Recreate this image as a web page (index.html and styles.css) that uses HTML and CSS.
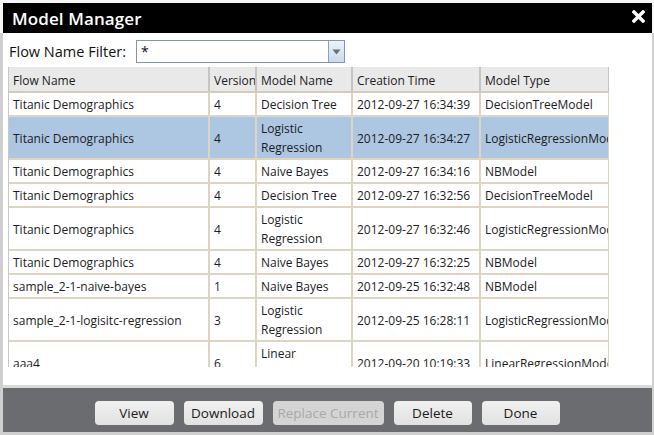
FILE: index.html
```html
<!DOCTYPE html>
<html>
<head>
<meta charset="utf-8">
<link rel="stylesheet" href="styles.css">
</head>
<body>
<div class="dialog">
  <div class="titlebar">
    <span class="title">Model Manager</span>
    <svg class="close" width="13" height="13" viewBox="0 0 13 13"><path d="M2 2 L11 11 M11 2 L2 11" stroke="#fff" stroke-width="3.4" stroke-linecap="square"/></svg>
  </div>
  <div class="content">
    <div class="filter">
      <span class="label">Flow Name Filter:</span>
      <div class="select">
        <span class="value">*</span>
        <span class="drop"><svg width="9" height="6" viewBox="0 0 9 6"><path d="M0.5 0.5 H8.5 L4.5 5.5 Z" fill="#6e6e6e"/></svg></span>
      </div>
    </div>
    <div class="grid">
      <table>
        <colgroup><col class="c1"><col class="c2"><col class="c3"><col class="c4"><col class="c5"></colgroup>
        <thead>
          <tr><th>Flow Name</th><th>Version</th><th>Model Name</th><th>Creation Time</th><th>Model Type</th></tr>
        </thead>
        <tbody>
          <tr><td>Titanic Demographics</td><td>4</td><td>Decision Tree</td><td>2012-09-27 16:34:39</td><td>DecisionTreeModel</td></tr>
          <tr class="sel"><td>Titanic Demographics</td><td>4</td><td>Logistic Regression</td><td>2012-09-27 16:34:27</td><td>LogisticRegressionModel</td></tr>
          <tr><td>Titanic Demographics</td><td>4</td><td>Naive Bayes</td><td>2012-09-27 16:34:16</td><td>NBModel</td></tr>
          <tr><td>Titanic Demographics</td><td>4</td><td>Decision Tree</td><td>2012-09-27 16:32:56</td><td>DecisionTreeModel</td></tr>
          <tr><td>Titanic Demographics</td><td>4</td><td>Logistic Regression</td><td>2012-09-27 16:32:46</td><td>LogisticRegressionModel</td></tr>
          <tr><td>Titanic Demographics</td><td>4</td><td>Naive Bayes</td><td>2012-09-27 16:32:25</td><td>NBModel</td></tr>
          <tr><td>sample_2-1-naive-bayes</td><td>1</td><td>Naive Bayes</td><td>2012-09-25 16:32:48</td><td>NBModel</td></tr>
          <tr><td>sample_2-1-logisitc-regression</td><td>3</td><td>Logistic Regression</td><td>2012-09-25 16:28:11</td><td>LogisticRegressionModel</td></tr>
          <tr><td>aaa4</td><td>6</td><td>Linear Regression</td><td>2012-09-20 10:19:33</td><td>LinearRegressionModel</td></tr>
        </tbody>
      </table>
    </div>
  </div>
  <div class="footer">
    <button class="btn w1">View</button>
    <button class="btn w1">Download</button>
    <button class="btn w2" disabled>Replace Current</button>
    <button class="btn w3">Delete</button>
    <button class="btn w3">Done</button>
  </div>
</div>
</body>
</html>
```
FILE: styles.css
```css
html, body {
  margin: 0;
  padding: 0;
}
body {
  width: 654px;
  height: 435px;
  background: linear-gradient(#f6f6f6 0, #f6f6f6 33px, #cfcfcf 33px);
  font-family: "Open Sans", "DejaVu Sans", sans-serif;
  overflow: hidden;
}
.dialog {
  margin: 3px 0 0 3px;
  width: 649px;
  height: 429px;
  display: flex;
  flex-direction: column;
  background: #fff;
}
.titlebar {
  height: 30px;
  background: #000;
  display: flex;
  align-items: center;
  justify-content: space-between;
  padding: 0 7px 0 9px;
}
.title {
  color: #fff;
  font-size: 17px;
  font-weight: 600;
  letter-spacing: 0.1px;
}
.close {
  margin-top: -3px;
}
.content {
  flex: 1;
  padding: 7px 0 0 5px;
  display: flex;
  flex-direction: column;
  border-bottom: 3px solid #d9d9d9;
}
.filter {
  display: flex;
  align-items: center;
  height: 23px;
  padding-left: 1px;
}
.label {
  font-size: 14.5px;
  color: #111;
  width: 127px;
}
.select {
  width: 207px;
  height: 21px;
  border: 1px solid #7d97b8;
  display: flex;
  justify-content: space-between;
}
.value {
  font-size: 14px;
  padding-left: 4px;
  line-height: 21px;
  color: #111;
}
.drop {
  width: 15px;
  border-left: 1px solid #8aa1bf;
  background: linear-gradient(#eef3fa, #c9d9ee);
  display: flex;
  align-items: center;
  justify-content: center;
}
.grid {
  margin-top: 4px;
  width: 600px;
  height: 300px;
  overflow: hidden;
  border-left: 1px solid #c8c8c8;
}
table {
  table-layout: fixed;
  border-collapse: collapse;
  width: 600px;
  font-size: 12px;
  color: #1c1c24;
}
col.c1 { width: 200px; }
col.c2 { width: 47px; }
col.c3 { width: 96px; }
col.c4 { width: 128px; }
col.c5 { width: 129px; }
th {
  background: #e9e9e9;
  font-weight: normal;
  text-align: left;
  height: 22px;
  padding: 2px 4px 0;
  border-right: 2px solid #c4c4c4;
  border-bottom: 2px solid #d4ccbc;
  white-space: nowrap;
  overflow: hidden;
}
td {
  padding: 2px 4px 1px;
  line-height: 19px;
  border-right: 2px solid #ddd4c3;
  border-bottom: 2px solid #ddd4c3;
  overflow: hidden;
  vertical-align: middle;
}
td:nth-child(4), td:nth-child(5) {
  white-space: nowrap;
}
td:first-child {
  white-space: nowrap;
}
tr.sel td {
  background: #adc6e2;
}
.footer {
  height: 44px;
  background: #6b6c70;
  display: flex;
  align-items: flex-start;
  justify-content: center;
  gap: 10px;
  padding: 13px 1px 0 0;
  box-sizing: border-box;
}
.btn {
  height: 24px;
  border: none;
  border-radius: 4px;
  background: linear-gradient(#f0f0f0, #e2e2e2);
  font-family: "Open Sans", "DejaVu Sans", sans-serif;
  font-size: 13.5px;
  color: #1a1a1a;
  padding: 0;
}
.btn:disabled {
  color: #a9a9a9;
  background: #d4d4d4;
}
.w1 { width: 79px; }
.w2 { width: 111px; }
.w3 { width: 78px; }
```
